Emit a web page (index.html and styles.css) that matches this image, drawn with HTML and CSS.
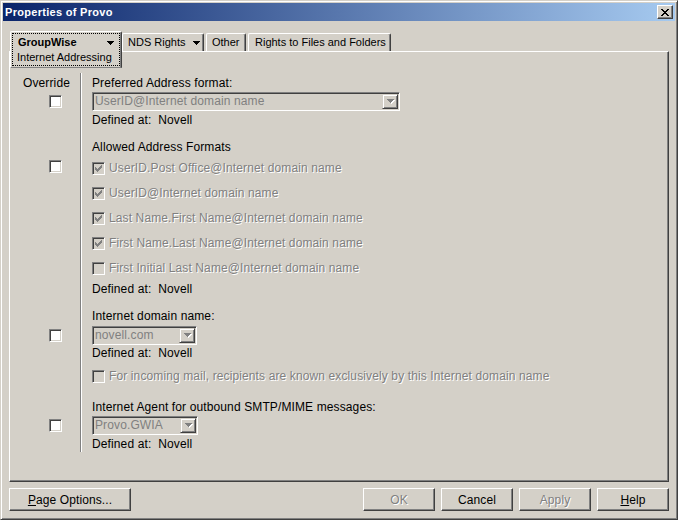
FILE: index.html
```html
<!DOCTYPE html>
<html>
<head>
<meta charset="utf-8">
<title>Properties of Provo</title>
<link rel="stylesheet" href="styles.css">
</head>
<body>
<div class="window">
  <div class="titlebar">
    <span class="title">Properties of Provo</span>
    <span class="close"><svg width="8" height="7" viewBox="0 0 8 7" shape-rendering="crispEdges"><path d="M0 0h2v1h-2z M6 0h2v1h-2z M1 1h2v1h-2z M5 1h2v1h-2z M2 2h4v1h-4z M3 3h2v1h-2z M2 4h4v1h-4z M1 5h2v1h-2z M5 5h2v1h-2z M0 6h2v1h-2z M6 6h2v1h-2z" fill="#000"/></svg></span>
  </div>
  <div class="client">
    <div class="tabstrip">
      <div class="tab-sel">
        <div class="focus">
          <div class="tab-line1"><b>GroupWise</b><svg class="tri" width="7" height="4" viewBox="0 0 7 4" shape-rendering="crispEdges"><path d="M0 0h7v1h-7z M1 1h5v1h-5z M2 2h3v1h-3z M3 3h1v1h-1z" fill="#000"/></svg></div>
          <div class="tab-line2">Internet Addressing</div>
        </div>
      </div>
      <div class="tab tab-nds">NDS Rights<svg class="tri" width="7" height="4" viewBox="0 0 7 4" shape-rendering="crispEdges"><path d="M0 0h7v1h-7z M1 1h5v1h-5z M2 2h3v1h-3z M3 3h1v1h-1z" fill="#000"/></svg></div>
      <div class="tab tab-other">Other</div>
      <div class="tab tab-rights">Rights to Files and Folders</div>
    </div>

    <div class="panel">
      <div class="section s1">
        <div class="ov"><div class="ov-label">Override</div><span class="cb ov-cb"></span></div>
        <div class="ct">
          <div class="line">Preferred Address format:</div>
          <div class="combo combo-wide">
            <span class="combo-text">UserID@Internet domain name</span>
            <span class="combo-btn"><svg width="8" height="5" viewBox="0 0 8 5" shape-rendering="crispEdges"><path d="M1 1h7v1h-7z M2 2h5v1h-5z M3 3h3v1h-3z M4 4h1v1h-1z" fill="#fff"/><path d="M0 0h7v1h-7z M1 1h5v1h-5z M2 2h3v1h-3z M3 3h1v1h-1z" fill="#808080"/></svg></span>
          </div>
          <div class="line defined">Defined at:&nbsp; Novell</div>
        </div>
      </div>

      <div class="section s2">
        <div class="ov"><span class="cb ov-cb"></span></div>
        <div class="ct">
          <div class="line">Allowed Address Formats</div>
          <div class="list">
            <div class="item"><span class="cb dis"><svg width="11" height="11" viewBox="0 0 11 11" shape-rendering="crispEdges"><path d="M8 2h1v1h-1z M7 3h2v1h-2z M2 4h1v1h-1z M6 4h3v1h-3z M2 5h2v1h-2z M5 5h3v1h-3z M2 6h5v1h-5z M3 7h3v1h-3z M4 8h1v1h-1z" fill="#808080"/></svg></span><span class="dtext">UserID.Post Office@Internet domain name</span></div>
            <div class="item"><span class="cb dis"><svg width="11" height="11" viewBox="0 0 11 11" shape-rendering="crispEdges"><path d="M8 2h1v1h-1z M7 3h2v1h-2z M2 4h1v1h-1z M6 4h3v1h-3z M2 5h2v1h-2z M5 5h3v1h-3z M2 6h5v1h-5z M3 7h3v1h-3z M4 8h1v1h-1z" fill="#808080"/></svg></span><span class="dtext">UserID@Internet domain name</span></div>
            <div class="item"><span class="cb dis"><svg width="11" height="11" viewBox="0 0 11 11" shape-rendering="crispEdges"><path d="M8 2h1v1h-1z M7 3h2v1h-2z M2 4h1v1h-1z M6 4h3v1h-3z M2 5h2v1h-2z M5 5h3v1h-3z M2 6h5v1h-5z M3 7h3v1h-3z M4 8h1v1h-1z" fill="#808080"/></svg></span><span class="dtext">Last Name.First Name@Internet domain name</span></div>
            <div class="item"><span class="cb dis"><svg width="11" height="11" viewBox="0 0 11 11" shape-rendering="crispEdges"><path d="M8 2h1v1h-1z M7 3h2v1h-2z M2 4h1v1h-1z M6 4h3v1h-3z M2 5h2v1h-2z M5 5h3v1h-3z M2 6h5v1h-5z M3 7h3v1h-3z M4 8h1v1h-1z" fill="#808080"/></svg></span><span class="dtext">First Name.Last Name@Internet domain name</span></div>
            <div class="item"><span class="cb dis"></span><span class="dtext">First Initial Last Name@Internet domain name</span></div>
          </div>
          <div class="line defined2">Defined at:&nbsp; Novell</div>
        </div>
      </div>

      <div class="section s3">
        <div class="ov"><span class="cb ov-cb"></span></div>
        <div class="ct">
          <div class="line">Internet domain name:</div>
          <div class="combo combo-dom">
            <span class="combo-text">novell.com</span>
            <span class="combo-btn"><svg width="8" height="5" viewBox="0 0 8 5" shape-rendering="crispEdges"><path d="M1 1h7v1h-7z M2 2h5v1h-5z M3 3h3v1h-3z M4 4h1v1h-1z" fill="#fff"/><path d="M0 0h7v1h-7z M1 1h5v1h-5z M2 2h3v1h-3z M3 3h1v1h-1z" fill="#808080"/></svg></span>
          </div>
          <div class="line defined2">Defined at:&nbsp; Novell</div>
          <div class="item item-single"><span class="cb dis"></span><span class="dtext">For incoming mail, recipients are known exclusively by this Internet domain name</span></div>
        </div>
      </div>

      <div class="section s4">
        <div class="ov"><span class="cb ov-cb"></span></div>
        <div class="ct">
          <div class="line">Internet Agent for outbound SMTP/MIME messages:</div>
          <div class="combo combo-gwia">
            <span class="combo-text">Provo.GWIA</span>
            <span class="combo-btn"><svg width="8" height="5" viewBox="0 0 8 5" shape-rendering="crispEdges"><path d="M1 1h7v1h-7z M2 2h5v1h-5z M3 3h3v1h-3z M4 4h1v1h-1z" fill="#fff"/><path d="M0 0h7v1h-7z M1 1h5v1h-5z M2 2h3v1h-3z M3 3h1v1h-1z" fill="#808080"/></svg></span>
          </div>
          <div class="line defined">Defined at:&nbsp; Novell</div>
        </div>
      </div>
    </div>

    <div class="buttons">
      <button class="btn btn-page"><span><u>P</u>age Options...</span></button>
      <button class="btn btn-ok btn-dis">OK</button>
      <button class="btn">Cancel</button>
      <button class="btn btn-dis">Apply</button>
      <button class="btn"><span><u>H</u>elp</span></button>
    </div>
  </div>
</div>
</body>
</html>
```

FILE: styles.css
```css
* { box-sizing: border-box; }
html, body { margin: 0; padding: 0; }
body {
  width: 678px;
  height: 520px;
  overflow: hidden;
  background: #D4D0C8;
  font-family: "Liberation Sans", Arial, sans-serif;
  font-size: 11px;
  color: #000;
}
svg { display: block; }

.window {
  width: 678px;
  height: 520px;
  border: 1px solid;
  border-color: #D4D0C8 #404040 #404040 #D4D0C8;
  box-shadow: inset 1px 1px #fff, inset -1px -1px #808080;
  padding: 2px;
  display: flex;
  flex-direction: column;
}

.titlebar {
  height: 18px;
  flex: none;
  background: linear-gradient(to right, #0A246A, #A6CAF0);
  display: flex;
  align-items: flex-start;
  justify-content: space-between;
}
.title {
  color: #fff;
  font-weight: bold;
  font-size: 11px;
  letter-spacing: 0.3px;
  line-height: 18px;
  padding-left: 2px;
}
.close {
  width: 16px;
  height: 14px;
  margin: 2px 2px 0 0;
  background: #D4D0C8;
  border: 1px solid;
  border-color: #fff #404040 #404040 #fff;
  box-shadow: inset -1px -1px #808080;
  display: flex;
  align-items: center;
  justify-content: center;
  padding-right: 1px;
}

.client {
  flex: 1;
  padding: 10px 6px 0 6px;
  display: flex;
  flex-direction: column;
}

/* tabs */
.tabstrip {
  display: flex;
  align-items: flex-start;
  height: 20px;
  padding-left: 1px;
  position: relative;
  z-index: 2;
}
.tab {
  height: 18px;
  margin-top: 2px;
  border: 1px solid;
  border-bottom: none;
  border-color: #fff #404040 transparent #fff;
  box-shadow: inset -1px 0 #808080;
  border-radius: 2px 2px 0 0;
  padding-left: 5px;
  display: flex;
  align-items: center;
  white-space: nowrap;
  line-height: 13px;
}
.tab-nds { width: 82px; }
.tab-nds .tri { margin-left: 8px; }
.tab-other { width: 40px; margin-left: 2px; }
.tab-rights { width: 143px; margin-left: 2px; padding-left: 6px; }

.tab-sel {
  width: 112px;
  height: 37px;
  background: #D4D0C8;
  border: 1px solid;
  border-color: #fff #404040 #808080 #fff;
  box-shadow: inset -1px 0 #808080;
  border-radius: 2px 2px 0 0;
  padding: 1px;
}
.focus {
  height: 100%;
  border: 1px dotted #000;
  padding: 2px 5px 0 4px;
}
.tab-line1 {
  display: flex;
  align-items: center;
  justify-content: space-between;
  line-height: 13px;
  padding-left: 1px;
}
.tab-line2 {
  line-height: 13px;
  margin-top: 2px;
  white-space: nowrap;
}

/* panel */
.panel {
  width: 660px;
  height: 431px;
  flex: none;
  border: 1px solid;
  border-color: #fff #404040 #404040 #fff;
  box-shadow: inset -1px -1px #808080;
  padding-top: 21px;
  font-size: 12px;
  letter-spacing: 0.12px;
}
.section { display: flex; }
.ov {
  width: 71px;
  flex: none;
  border-right: 1px solid #808080;
}
.ov-label {
  line-height: 13px;
  padding: 4px 0 0 3px;
  text-align: center;
}
.ct {
  flex: 1;
  border-left: 1px solid #fff;
  padding-left: 10px;
}
.line { line-height: 13px; white-space: nowrap; }

.cb {
  display: block;
  width: 13px;
  height: 13px;
  flex: none;
  border: 1px solid;
  border-color: #808080 #fff #fff #808080;
  box-shadow: inset 1px 1px #404040, inset -1px -1px #D4D0C8;
  background: #fff;
}
.cb.dis { background: #D4D0C8; }
.ov-cb { margin-left: 39px; }

.s1 .ct { padding-top: 4px; padding-bottom: 7px; }
.s1 .ov-cb { margin-top: 5px; }
.s1 .combo { margin-top: 2px; }
.defined { margin-top: 3px; }
.defined2 { margin-top: 2px; }

.s2 .ct { padding-top: 7px; padding-bottom: 7px; }
.s2 .ov-cb { margin-top: 26px; }
.list { margin-top: 2px; }
.item {
  display: flex;
  align-items: center;
  height: 25px;
  gap: 4px;
  white-space: nowrap;
}
.dtext {
  color: #808080;
  text-shadow: 1px 1px 0 #fff;
  line-height: 13px;
}

.s3 .ct { padding-top: 7px; padding-bottom: 6px; }
.s3 .ov-cb { margin-top: 26px; }
.s3 .combo { margin-top: 3px; }
.item-single { margin-top: 4px; }

.s4 .ct { padding-top: 6px; padding-bottom: 1px; }
.s4 .ov-cb { margin-top: 24px; }
.s4 .combo { margin-top: 2px; }

.combo {
  display: flex;
  height: 19px;
  border: 1px solid;
  border-color: #808080 #fff #fff #808080;
  box-shadow: inset 1px 1px #404040, inset -1px -1px #D4D0C8;
  padding: 1px;
  background: #D4D0C8;
}
.combo-wide { width: 308px; }
.combo-dom { width: 105px; }
.combo-gwia { width: 106px; }
.combo-text {
  flex: 1;
  color: #808080;
  line-height: 15px;
  padding-left: 1px;
  white-space: nowrap;
  overflow: hidden;
}
.combo-btn {
  width: 16px;
  height: 15px;
  flex: none;
  background: #D4D0C8;
  border: 1px solid;
  border-color: #D4D0C8 #404040 #404040 #D4D0C8;
  box-shadow: inset 1px 1px #fff, inset -1px -1px #808080;
  display: flex;
  align-items: center;
  justify-content: center;
  padding-left: 1px;
}

/* buttons */
.buttons {
  display: flex;
  gap: 6px;
  margin-top: 6px;
}
.btn {
  width: 72px;
  height: 23px;
  margin: 0;
  padding: 0;
  background: #D4D0C8;
  border: 1px solid;
  border-color: #fff #404040 #404040 #fff;
  box-shadow: inset -1px -1px #808080;
  font-family: "Liberation Sans", Arial, sans-serif;
  font-size: 12px;
  letter-spacing: 0.1px;
  color: #000;
  display: flex;
  align-items: center;
  justify-content: center;
  border-radius: 0;
}
.btn-page { width: 122px; }
.btn-ok { margin-left: auto; }
.btn-dis { color: #808080; text-shadow: 1px 1px 0 #fff; }
```
